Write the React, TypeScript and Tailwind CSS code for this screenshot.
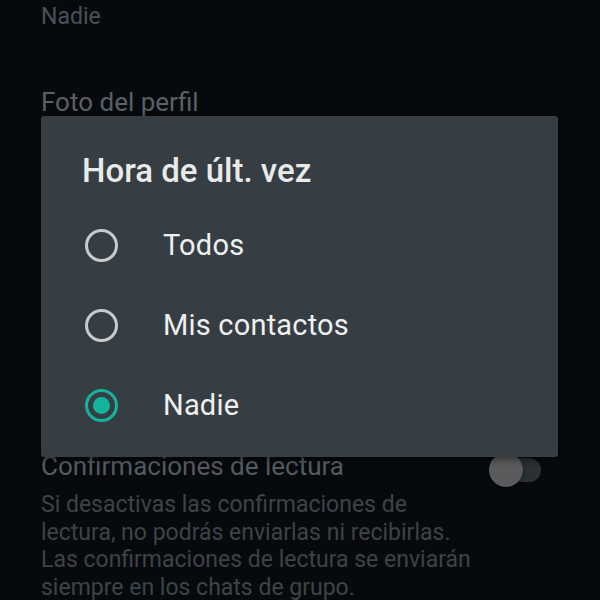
import React from 'react';

const font = { fontFamily: 'Roboto, "Noto Sans", sans-serif' };

type Option = { label: string; checked?: boolean };

const options: Option[] = [
  { label: 'Todos' },
  { label: 'Mis contactos' },
  { label: 'Nadie', checked: true },
];

const Radio: React.FC<{ checked?: boolean }> = ({ checked }) =>
  checked ? (
    <span className="flex h-[33px] w-[33px] items-center justify-center rounded-full border-[3px] border-[#14b39b]">
      <span className="h-[17px] w-[17px] rounded-full bg-[#14b39b]" />
    </span>
  ) : (
    <span className="h-[33px] w-[33px] rounded-full border-[3px] border-[#c9cacb]" />
  );

const Toggle: React.FC = () => (
  <div className="relative mt-[2px] flex h-[34px] w-[52px] items-center">
    <div className="ml-[4px] h-[24px] w-[48px] rounded-full bg-[#2b3034]" />
    <div className="absolute left-0 top-0 h-[34px] w-[34px] rounded-full bg-[#5b5b5d] shadow-[0_1px_3px_rgba(0,0,0,0.6)]" />
  </div>
);

export default function App() {
  return (
    <div className="relative h-[600px] w-[600px] overflow-hidden bg-[#060a0d]" style={font}>
      {/* settings list behind the dialog */}
      <div className="flex flex-col pl-[41px] pr-[59px]">
        <div className="pt-[3px] text-[23px] leading-[28px] text-[#4a5055]">Nadie</div>
        <div className="mt-[56px] text-[26px] leading-[30px] text-[#5a6065]">Foto del perfil</div>
        <div className="h-[334px]" />
        <div className="flex items-start justify-between">
          <div className="text-[26px] leading-[30px] text-[#555b60]">Confirmaciones de lectura</div>
          <Toggle />
        </div>
        <p className="mt-[4px] w-[440px] text-[23px] leading-[27.5px] text-[#3d4347]">
          Si desactivas las confirmaciones de lectura, no podrás enviarlas ni recibirlas. Las
          confirmaciones de lectura se enviarán siempre en los chats de grupo.
        </p>
      </div>

      {/* dialog */}
      <div className="absolute left-[41px] top-[116px] flex h-[341px] w-[517px] flex-col rounded-[3px] bg-[#363e44] pt-[35px] shadow-[0_2px_8px_rgba(0,0,0,0.5)]">
        <h2 className="pl-[41px] text-[33px] font-medium leading-[40px] text-[#e9eaea]">Hora de últ. vez</h2>
        <div className="mt-[14px] flex flex-col">
          {options.map((o) => (
            <div key={o.label} className="flex h-[80px] items-center pl-[44px]">
              <Radio checked={o.checked} />
              <span className="ml-[45px] text-[29px] leading-[36px] tracking-[0.2px] text-[#eef0f0]">{o.label}</span>
            </div>
          ))}
        </div>
      </div>
    </div>
  );
}
